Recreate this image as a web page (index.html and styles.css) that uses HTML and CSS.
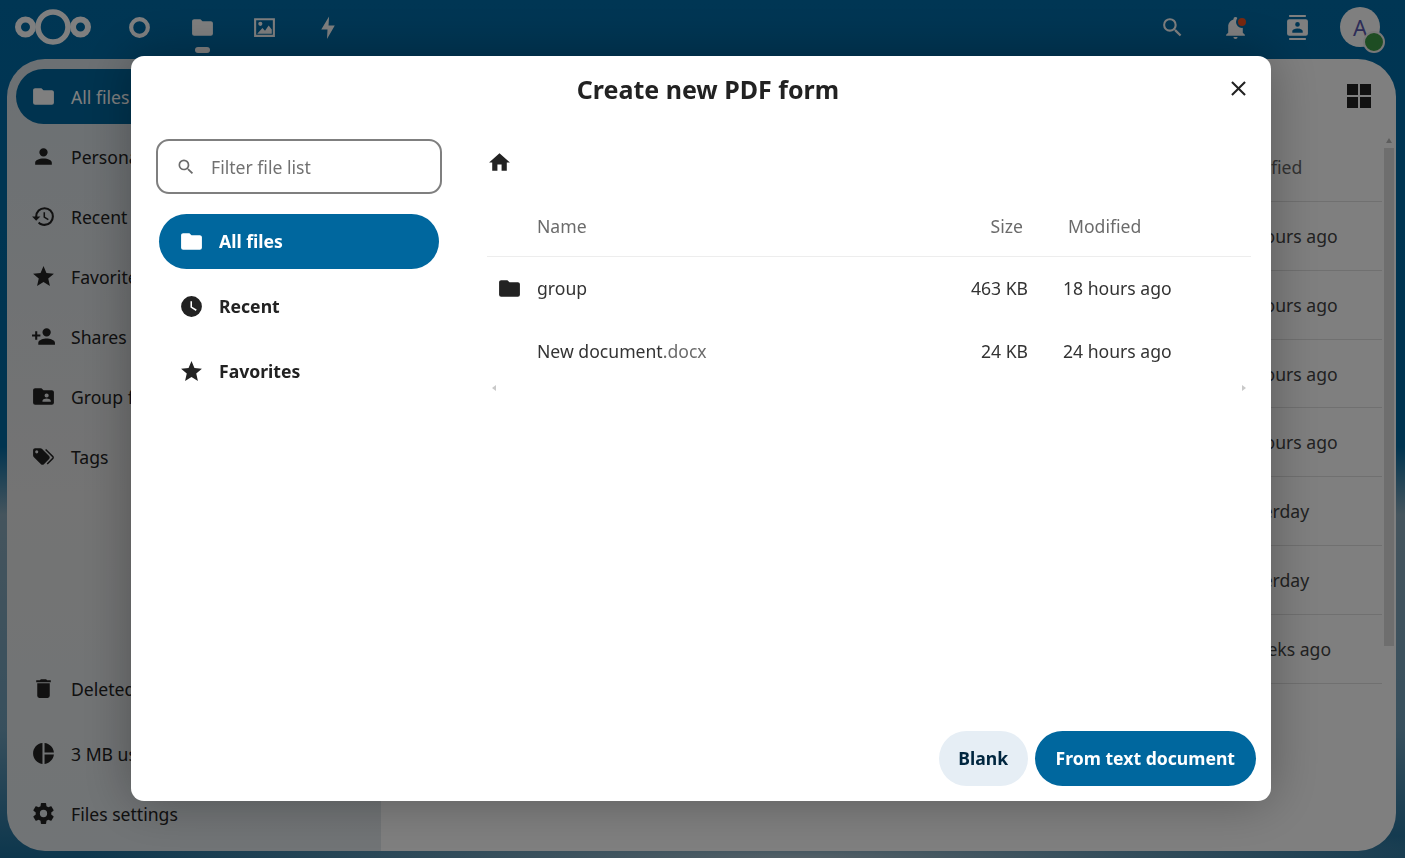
FILE: index.html
```html
<!DOCTYPE html>
<html lang="en">
<head>
    <meta charset="UTF-8">
    <title>Files - Nextcloud</title>
    <link rel="stylesheet" href="styles.css">
</head>
<body>
    <header class="topbar">
        <svg class="logo" viewBox="0 0 76 38">
            <circle class="logo-side" cx="10.5" cy="19" r="7.5" />
            <circle cx="38" cy="19" r="15" />
            <circle class="logo-side" cx="65.5" cy="19" r="7.5" />
        </svg>
        <nav class="apps">
            <a class="app-link"><svg class="icon" viewBox="0 0 24 24"><path d="M12,2A10,10 0 0,0 2,12A10,10 0 0,0 12,22A10,10 0 0,0 22,12A10,10 0 0,0 12,2M12,6A6,6 0 0,1 18,12A6,6 0 0,1 12,18A6,6 0 0,1 6,12A6,6 0 0,1 12,6Z"/></svg></a>
            <a class="app-link active"><svg class="icon" viewBox="0 0 24 24"><path d="M10,4H4C2.89,4 2,4.89 2,6V18A2,2 0 0,0 4,20H20A2,2 0 0,0 22,18V8C22,6.89 21.1,6 20,6H12L10,4Z"/></svg></a>
            <a class="app-link"><svg class="icon" viewBox="0 0 24 24"><path fill-rule="evenodd" d="M2,3H22V21H2ZM4,5V19H20V5ZM8,6.5A2,2 0 1,1 8,10.5A2,2 0 1,1 8,6.5ZM5,18L10,12.5L12.5,15L16,10L19,14V18Z"/></svg></a>
            <a class="app-link"><svg class="icon" viewBox="0 0 24 24"><path d="M13.5,1.5L6,14H12L11.5,23L19,10H13Z"/></svg></a>
        </nav>
        <div class="top-actions">
            <a class="app-link"><svg class="icon" viewBox="0 0 24 24"><path d="M9.5,3A6.5,6.5 0 0,1 16,9.5C16,11.11 15.41,12.59 14.44,13.73L14.71,14H15.5L20.5,19L19,20.5L14,15.5V14.71L13.73,14.44C12.59,15.41 11.11,16 9.5,16A6.5,6.5 0 0,1 3,9.5A6.5,6.5 0 0,1 9.5,3M9.5,5C7,5 5,7 5,9.5C5,12 7,14 9.5,14C12,14 14,12 14,9.5C14,7 12,5 9.5,5Z"/></svg></a>
            <a class="app-link bell"><svg class="icon" viewBox="0 0 24 24"><path d="M21,19V20H3V19L5,17V11C5,7.9 7.03,5.17 10,4.29C10,4.19 10,4.1 10,4A2,2 0 0,1 12,2A2,2 0 0,1 14,4C14,4.1 14,4.19 14,4.29C16.97,5.17 19,7.9 19,11V17L21,19M14,21A2,2 0 0,1 12,23A2,2 0 0,1 10,21"/></svg><span class="bell-dot"></span></a>
            <a class="app-link"><svg class="icon" viewBox="0 0 24 24"><path d="M20,0H4V2H20V0M4,24H20V22H4V24M20,4H4A2,2 0 0,0 2,6V18A2,2 0 0,0 4,20H20A2,2 0 0,0 22,18V6A2,2 0 0,0 20,4M12,6.75A2.25,2.25 0 0,1 14.25,9A2.25,2.25 0 0,1 12,11.25A2.25,2.25 0 0,1 9.75,9A2.25,2.25 0 0,1 12,6.75M17,17H7V15.5C7,13.83 10.33,13 12,13C13.67,13 17,13.83 17,15.5V17Z"/></svg></a>
            <div class="avatar">A<span class="status-dot"></span></div>
        </div>
    </header>

    <div class="app">
        <aside class="sidebar">
            <a class="side-item active"><svg class="icon" viewBox="0 0 24 24"><path d="M10,4H4C2.89,4 2,4.89 2,6V18A2,2 0 0,0 4,20H20A2,2 0 0,0 22,18V8C22,6.89 21.1,6 20,6H12L10,4Z"/></svg>All files</a>
            <a class="side-item"><svg class="icon" viewBox="0 0 24 24"><path d="M12,4A4,4 0 0,1 16,8A4,4 0 0,1 12,12A4,4 0 0,1 8,8A4,4 0 0,1 12,4M12,14C16.42,14 20,15.79 20,18V20H4V18C4,15.79 7.58,14 12,14Z"/></svg>Personal files</a>
            <a class="side-item"><svg class="icon" viewBox="0 0 24 24"><path d="M13.5,8H12V13L16.28,15.54L17,14.33L13.5,12.25V8M13,3A9,9 0 0,0 4,12H1L4.96,16.03L9,12H6A7,7 0 0,1 13,5A7,7 0 0,1 20,12A7,7 0 0,1 13,19C11.07,19 9.32,18.21 8.06,16.94L6.64,18.36C8.27,20 10.5,21 13,21A9,9 0 0,0 22,12A9,9 0 0,0 13,3"/></svg>Recent</a>
            <a class="side-item"><svg class="icon" viewBox="0 0 24 24"><path d="M12,17.27L18.18,21L16.54,13.97L22,9.24L14.81,8.62L12,2L9.19,8.62L2,9.24L7.45,13.97L5.82,21L12,17.27Z"/></svg>Favorites</a>
            <a class="side-item"><svg class="icon" viewBox="0 0 24 24"><path d="M15,14C12.33,14 7,15.33 7,18V20H23V18C23,15.33 17.67,14 15,14M6,10V7H4V10H1V12H4V15H6V12H9V10M15,12A4,4 0 0,0 19,8A4,4 0 0,0 15,4A4,4 0 0,0 11,8A4,4 0 0,0 15,12Z"/></svg>Shares</a>
            <a class="side-item"><svg class="icon" viewBox="0 0 24 24"><path d="M19,17H11V16C11,14.67 13.67,14 15,14C16.33,14 19,14.67 19,16M15,9A2,2 0 0,1 17,11A2,2 0 0,1 15,13A2,2 0 0,1 13,11A2,2 0 0,1 15,9M20,6H12L10,4H4C2.89,4 2,4.89 2,6V18A2,2 0 0,0 4,20H20A2,2 0 0,0 22,18V8C22,6.89 21.1,6 20,6Z"/></svg>Group folders</a>
            <a class="side-item"><svg class="icon" viewBox="0 0 24 24"><path d="M5.5,9A1.5,1.5 0 0,0 7,7.5A1.5,1.5 0 0,0 5.5,6A1.5,1.5 0 0,0 4,7.5A1.5,1.5 0 0,0 5.5,9M17.41,11.58C17.77,11.94 18,12.44 18,13C18,13.55 17.78,14.05 17.41,14.41L12.41,19.41C12.05,19.77 11.55,20 11,20C10.45,20 9.95,19.78 9.58,19.41L2.59,12.42C2.22,12.05 2,11.55 2,11V6C2,4.89 2.89,4 4,4H9C9.55,4 10.05,4.22 10.41,4.58L17.41,11.58M13.54,5.71L14.54,4.71L21.41,11.58C21.78,11.94 22,12.45 22,13C22,13.55 21.78,14.05 21.42,14.41L16.04,19.79L15.04,18.79L20.75,13L13.54,5.71Z"/></svg>Tags</a>

            <a class="side-item side-bottom"><svg class="icon" viewBox="0 0 24 24"><path d="M19,4H15.5L14.5,3H9.5L8.5,4H5V6H19M6,19A2,2 0 0,0 8,21H16A2,2 0 0,0 18,19V7H6V19Z"/></svg>Deleted files</a>
            <a class="side-item side-gap"><svg class="icon" viewBox="0 0 24 24"><path d="M11,2V22C5.9,21.5 2,17.2 2,12C2,6.8 5.9,2.5 11,2M13,2V11H22C21.5,6.2 17.8,2.5 13,2M13,13V22C17.7,21.5 21.5,17.8 22,13H13Z"/></svg>3 MB used</a>
            <a class="side-item"><svg class="icon" viewBox="0 0 24 24"><path d="M12,15.5A3.5,3.5 0 0,1 8.5,12A3.5,3.5 0 0,1 12,8.5A3.5,3.5 0 0,1 15.5,12A3.5,3.5 0 0,1 12,15.5M19.43,12.97C19.47,12.65 19.5,12.33 19.5,12C19.5,11.67 19.47,11.34 19.43,11L21.54,9.37C21.73,9.22 21.78,8.95 21.66,8.73L19.66,5.27C19.54,5.05 19.27,4.96 19.05,5.05L16.56,6.05C16.04,5.66 15.5,5.32 14.87,5.07L14.5,2.42C14.46,2.18 14.25,2 14,2H10C9.75,2 9.54,2.18 9.5,2.42L9.13,5.07C8.5,5.32 7.96,5.66 7.44,6.05L4.95,5.05C4.73,4.96 4.46,5.05 4.34,5.27L2.34,8.73C2.21,8.95 2.27,9.22 2.46,9.37L4.57,11C4.53,11.34 4.5,11.67 4.5,12C4.5,12.33 4.53,12.65 4.57,12.97L2.46,14.63C2.27,14.78 2.21,15.05 2.34,15.27L4.34,18.73C4.46,18.95 4.73,19.03 4.95,18.95L7.44,17.94C7.96,18.34 8.5,18.68 9.13,18.93L9.5,21.58C9.54,21.82 9.75,22 10,22H14C14.25,22 14.46,21.82 14.5,21.58L14.87,18.93C15.5,18.67 16.04,18.34 16.56,17.94L19.05,18.95C19.27,19.03 19.54,18.95 19.66,18.73L21.66,15.27C21.78,15.05 21.73,14.78 21.54,14.63L19.43,12.97Z"/></svg>Files settings</a>
        </aside>

        <main class="main">
            <div class="toolbar">
                <svg class="grid-icon" viewBox="0 0 24 24"><rect width="11" height="11"/><rect x="13" width="11" height="11"/><rect y="13" width="11" height="11"/><rect x="13" y="13" width="11" height="11"/></svg>
            </div>
            <div class="list-wrap">
                <div class="list">
                    <div class="list-head">Modified</div>
                    <div class="list-row">18 hours ago</div>
                    <div class="list-row">19 hours ago</div>
                    <div class="list-row">20 hours ago</div>
                    <div class="list-row">24 hours ago</div>
                    <div class="list-row">yesterday</div>
                    <div class="list-row">yesterday</div>
                    <div class="list-row">2 weeks ago</div>
                </div>
                <div class="scrollbar">
                    <span class="scroll-up"></span>
                    <span class="scroll-thumb"></span>
                </div>
            </div>
        </main>
    </div>

    <div class="overlay">
        <div class="modal">
            <div class="modal-head">
                <h2>Create new PDF form</h2>
                <button class="close-btn"><svg class="icon" viewBox="0 0 24 24"><path d="M19,6.41L17.59,5L12,10.59L6.41,5L5,6.41L10.59,12L5,17.59L6.41,19L12,13.41L17.59,19L19,17.59L13.41,12L19,6.41Z"/></svg></button>
            </div>

            <div class="modal-body">
                <div class="picker-nav">
                    <label class="filter">
                        <svg viewBox="0 0 24 24"><path d="M9.5,3A6.5,6.5 0 0,1 16,9.5C16,11.11 15.41,12.59 14.44,13.73L14.71,14H15.5L20.5,19L19,20.5L14,15.5V14.71L13.73,14.44C12.59,15.41 11.11,16 9.5,16A6.5,6.5 0 0,1 3,9.5A6.5,6.5 0 0,1 9.5,3M9.5,5C7,5 5,7 5,9.5C5,12 7,14 9.5,14C12,14 14,12 14,9.5C14,7 12,5 9.5,5Z"/></svg>
                        <input type="text" placeholder="Filter file list">
                    </label>
                    <a class="nav-item active"><svg class="icon" viewBox="0 0 24 24"><path d="M10,4H4C2.89,4 2,4.89 2,6V18A2,2 0 0,0 4,20H20A2,2 0 0,0 22,18V8C22,6.89 21.1,6 20,6H12L10,4Z"/></svg>All files</a>
                    <a class="nav-item"><svg class="icon" viewBox="0 0 24 24"><path d="M12,2A10,10 0 0,0 2,12A10,10 0 0,0 12,22A10,10 0 0,0 22,12A10,10 0 0,0 12,2M16.2,16.2L11,13V7H12.5V12.2L17,14.9L16.2,16.2Z"/></svg>Recent</a>
                    <a class="nav-item"><svg class="icon" viewBox="0 0 24 24"><path d="M12,17.27L18.18,21L16.54,13.97L22,9.24L14.81,8.62L12,2L9.19,8.62L2,9.24L7.45,13.97L5.82,21L12,17.27Z"/></svg>Favorites</a>
                </div>

                <div class="picker-files">
                    <div class="crumbs"><svg class="home-icon" viewBox="0 0 24 24"><path d="M10,20V14H14V20H19V12H22L12,3L2,12H5V20H10Z"/></svg></div>
                    <div class="file-row file-head">
                        <span></span>
                        <span>Name</span>
                        <span class="size">Size</span>
                        <span class="modified">Modified</span>
                    </div>
                    <div class="file-row">
                        <svg class="icon" viewBox="0 0 24 24"><path d="M10,4H4C2.89,4 2,4.89 2,6V18A2,2 0 0,0 4,20H20A2,2 0 0,0 22,18V8C22,6.89 21.1,6 20,6H12L10,4Z"/></svg>
                        <span>group</span>
                        <span class="size">463 KB</span>
                        <span class="modified">18 hours ago</span>
                    </div>
                    <div class="file-row">
                        <span></span>
                        <span>New document<span class="ext">.docx</span></span>
                        <span class="size">24 KB</span>
                        <span class="modified">24 hours ago</span>
                    </div>
                    <div class="hscroll">
                        <span class="arrow-left"></span>
                        <span class="arrow-right"></span>
                    </div>
                </div>
            </div>

            <div class="modal-foot">
                <button class="btn btn-light">Blank</button>
                <button class="btn btn-primary">From text document</button>
            </div>
        </div>
    </div>
</body>
</html>
```

FILE: styles.css
```css
* {
    box-sizing: border-box;
}

body {
    margin: 0;
    height: 858px;
    overflow: hidden;
    font-family: 'Noto Sans', sans-serif;
    font-size: 17.6px;
    color: #222;
    background:
        radial-gradient(ellipse 720px 40px at 800px 858px, #a8c0cd, transparent),
        linear-gradient(180deg, #006ca8 0, #0068a0 52%, #8aa9ba 60%, #6f9fba 85%, #1a6d9a 100%);
}

.icon {
    width: 25px;
    height: 25px;
    flex: none;
    fill: currentColor;
}

/* top bar */
.topbar {
    display: flex;
    align-items: center;
    height: 59px;
    padding-bottom: 5px;
    color: #fff;
}

.logo {
    width: 76px;
    height: 38px;
    margin-left: 15px;
    flex: none;
    fill: none;
    stroke: #fff;
    stroke-width: 5.5;
}

.logo-side {
    stroke-width: 6;
}

.apps {
    display: flex;
    margin-left: 17.5px;
}

.top-actions {
    display: flex;
    align-items: center;
    margin-left: auto;
    padding-right: 25px;
}

.app-link {
    position: relative;
    display: flex;
    align-items: center;
    justify-content: center;
    width: 62.5px;
    height: 50px;
}

.app-link.active::after {
    content: "";
    position: absolute;
    left: 24px;
    bottom: -1px;
    width: 15px;
    height: 6px;
    border-radius: 3px;
    background: #fff;
}

.bell-dot {
    position: absolute;
    top: 14px;
    right: 19px;
    width: 12px;
    height: 12px;
    border-radius: 50%;
    background: #f2501f;
    border: 2px solid #006ca8;
}

.avatar {
    position: relative;
    width: 40px;
    height: 40px;
    margin-left: 11px;
    border-radius: 50%;
    background: #fff;
    color: #5a5ab0;
    font-size: 22px;
    line-height: 40px;
    text-align: center;
}

.status-dot {
    position: absolute;
    right: -5px;
    bottom: -6px;
    width: 22px;
    height: 22px;
    border-radius: 50%;
    background: #3c9a46;
    border: 2px solid #f0f0f0;
}

/* page behind the dialog */
.app {
    display: flex;
    height: 792px;
    margin: 0 9px 0 7px;
    border-radius: 38px;
    overflow: hidden;
}

.sidebar {
    display: flex;
    flex-direction: column;
    gap: 5px;
    width: 374px;
    padding: 10px 9px 10px;
    background: linear-gradient(180deg, #d8e1e7, #e8e8e8 55%, #e2e8ec);
}

.side-item {
    display: flex;
    align-items: center;
    gap: 15px;
    height: 55px;
    flex: none;
    padding-left: 15px;
    border-radius: 28px;
    white-space: nowrap;
}

.side-item.active {
    background: #00679e;
    color: #fff;
}

.side-bottom {
    margin-top: auto;
}

.side-gap {
    margin-top: 5px;
}

.main {
    flex: 1;
    display: flex;
    flex-direction: column;
    background: #fff;
}

.toolbar {
    display: flex;
    align-items: center;
    justify-content: flex-end;
    height: 74px;
    padding-right: 25px;
}

.grid-icon {
    width: 24px;
    height: 24px;
    fill: #222;
}

.list-wrap {
    display: flex;
    gap: 2px;
    padding-right: 2px;
}

.list {
    flex: 1;
}

.list-head,
.list-row {
    height: 68.8px;
    padding-left: 848px;
    border-bottom: 1px solid #e0e0e0;
    line-height: 68px;
    color: #444;
}

.list-head {
    height: 69px;
    color: #666;
}

.scrollbar {
    display: flex;
    flex-direction: column;
    width: 10px;
}

.scroll-up {
    width: 0;
    margin: 5px auto;
    border: 3px solid transparent;
    border-top: 0;
    border-bottom: 5px solid #bbb;
}

.scroll-thumb {
    height: 498px;
    background: #ddd;
}

/* dialog */
.overlay {
    position: fixed;
    inset: 0;
    display: flex;
    padding: 56px 134px 57px 131px;
    background: rgba(0, 0, 0, 0.5);
}

.modal {
    flex: 1;
    display: flex;
    flex-direction: column;
    position: relative;
    background: #fff;
    border-radius: 13px;
    box-shadow: 0 0 50px rgba(0, 0, 0, 0.3);
}

.modal-head {
    height: 83px;
    flex: none;
    padding: 14px 0 0 14px;
    text-align: center;
}

.modal-head h2 {
    margin: 0;
    font-size: 25px;
    font-weight: 700;
    line-height: 38px;
    color: #222;
}

.close-btn {
    position: absolute;
    top: 20px;
    right: 20px;
    display: flex;
    padding: 0;
    border: none;
    background: none;
    color: #222;
    cursor: pointer;
}

.modal-body {
    flex: 1;
    display: flex;
    min-height: 0;
}

.picker-nav {
    width: 310px;
    padding-left: 25px;
    flex: none;
    display: flex;
    flex-direction: column;
    gap: 10px;
}

.filter {
    display: flex;
    align-items: center;
    gap: 15px;
    width: 286px;
    height: 55px;
    margin-bottom: 10px;
    padding-left: 18px;
    border: 2px solid #7f7f7f;
    border-radius: 13px;
}

.filter svg {
    width: 20px;
    height: 20px;
    flex: none;
    fill: #6b6b6b;
}

.filter input {
    flex: 1;
    width: 100%;
    border: none;
    outline: none;
    padding: 0;
    font: inherit;
}

.filter input::placeholder {
    color: #717171;
    opacity: 1;
}

.nav-item {
    display: flex;
    align-items: center;
    gap: 15px;
    width: 280px;
    height: 55px;
    margin-left: 3px;
    padding: 0 0 2px 20px;
    border-radius: 28px;
    font-weight: 700;
}

.nav-item .icon {
    margin-top: 2px;
}

.nav-item.active {
    background: #00679e;
    color: #fff;
}

.picker-files {
    flex: 1;
    margin: 0 20px 0 46px;
    min-width: 0;
}

.crumbs {
    display: flex;
    align-items: center;
    height: 47px;
}

.home-icon {
    width: 25px;
    height: 25px;
    fill: #222;
}

.file-row {
    display: grid;
    grid-template-columns: 50px 1fr 90px 208px;
    align-items: center;
    height: 63px;
    padding-bottom: 2px;
    color: #333;
}

.file-row .icon {
    margin: 2px 0 0 10px;
    color: #222;
}

.file-head {
    height: 71px;
    padding: 10px 0 0;
    border-bottom: 1px solid #ededed;
    color: #6b6b6b;
}

.size {
    padding-right: 15px;
    text-align: right;
    white-space: nowrap;
}

.modified {
    padding-left: 20px;
    white-space: nowrap;
}

.file-head .size {
    padding-right: 20px;
}

.file-head .modified {
    padding-left: 25px;
}

.ext {
    color: #6b6b6b;
}

.hscroll {
    display: flex;
    align-items: center;
    justify-content: space-between;
    height: 10px;
    padding: 0 5px;
}

.arrow-left,
.arrow-right {
    width: 0;
    border: 3px solid transparent;
}

.arrow-left {
    border-left: 0;
    border-right: 4px solid #c9c9c9;
}

.arrow-right {
    border-right: 0;
    border-left: 4px solid #c9c9c9;
}

.modal-foot {
    display: flex;
    justify-content: flex-end;
    gap: 7px;
    padding: 15px;
}

.btn {
    height: 55px;
    padding: 0 21px 2px;
    border: none;
    border-radius: 28px;
    font: inherit;
    font-weight: 700;
    cursor: pointer;
}

.btn-light {
    padding: 0 19.5px 2px;
    background: #e6eef5;
    color: #00263f;
}

.btn-primary {
    background: #00679e;
    color: #fff;
}
```
